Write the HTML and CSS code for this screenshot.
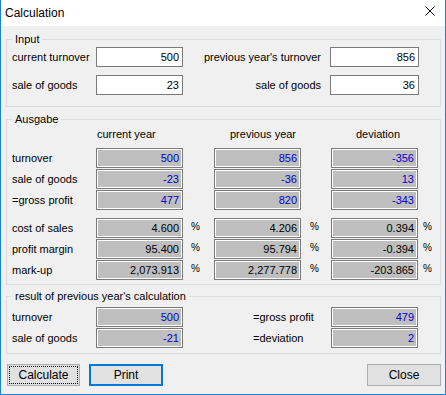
FILE: index.html
```html
<!DOCTYPE html>
<html lang="en">
<head>
    <meta charset="UTF-8">
    <title>Calculation</title>
    <link rel="stylesheet" href="styles.css">
</head>
<body>
    <!-- Janela de cálculo -->
    <div class="window">
        <div class="titlebar">
            <span class="title">Calculation</span>
            <svg class="close-x" width="10" height="10" viewBox="0 0 10 10">
                <path d="M0.5 0.5 L9.5 9.5 M9.5 0.5 L0.5 9.5" stroke="#000" stroke-width="1" fill="none"/>
            </svg>
        </div>

        <div class="client">
            <!-- Entrada -->
            <fieldset class="group group-input">
                <legend>Input</legend>
                <div class="input-grid">
                    <span class="lbl">current turnover</span>
                    <input class="edit" type="text" value="500">
                    <span class="lbl lbl-right">previous year's turnover</span>
                    <input class="edit" type="text" value="856">

                    <span class="lbl">sale of goods</span>
                    <input class="edit" type="text" value="23">
                    <span class="lbl lbl-right">sale of goods</span>
                    <input class="edit" type="text" value="36">
                </div>
            </fieldset>

            <!-- Saída -->
            <fieldset class="group group-wide">
                <legend>Ausgabe</legend>
                <div class="cols head">
                    <span class="hd hd-cur">current year</span>
                    <span class="hd hd-prev">previous year</span>
                    <span class="hd hd-dev">deviation</span>
                </div>
                <div class="cols rows">
                    <span class="lbl">turnover</span>
                    <div class="out blue c2">500</div>
                    <div class="out blue c4">856</div>
                    <div class="out blue c6">-356</div>

                    <span class="lbl">sale of goods</span>
                    <div class="out blue c2">-23</div>
                    <div class="out blue c4">-36</div>
                    <div class="out blue c6">13</div>

                    <span class="lbl">=gross profit</span>
                    <div class="out blue c2">477</div>
                    <div class="out blue c4">820</div>
                    <div class="out blue c6">-343</div>
                </div>
                <div class="cols rows rows-pct">
                    <span class="lbl">cost of sales</span>
                    <div class="out">4.600</div>
                    <span class="pct pct-a">%</span>
                    <div class="out">4.206</div>
                    <span class="pct pct-b">%</span>
                    <div class="out">0.394</div>
                    <span class="pct pct-c">%</span>

                    <span class="lbl">profit margin</span>
                    <div class="out">95.400</div>
                    <span class="pct pct-a">%</span>
                    <div class="out">95.794</div>
                    <span class="pct pct-b">%</span>
                    <div class="out">-0.394</div>
                    <span class="pct pct-c">%</span>

                    <span class="lbl">mark-up</span>
                    <div class="out">2,073.913</div>
                    <span class="pct pct-a">%</span>
                    <div class="out">2,277.778</div>
                    <span class="pct pct-b">%</span>
                    <div class="out">-203.865</div>
                    <span class="pct pct-c">%</span>
                </div>
            </fieldset>

            <!-- Resultado do ano anterior -->
            <fieldset class="group group-wide group-result">
                <legend>result of previous year's calculation</legend>
                <div class="cols rows">
                    <span class="lbl">turnover</span>
                    <div class="out blue c2">500</div>
                    <span class="lbl lbl-mid">=gross profit</span>
                    <div class="out blue c6">479</div>

                    <span class="lbl">sale of goods</span>
                    <div class="out blue c2">-21</div>
                    <span class="lbl lbl-mid">=deviation</span>
                    <div class="out blue c6">2</div>
                </div>
            </fieldset>

            <!-- Botões -->
            <div class="buttons">
                <button class="btn btn-focus">Calculate</button>
                <button class="btn btn-default">Print</button>
                <button class="btn btn-close">Close</button>
            </div>
        </div>
    </div>
</body>
</html>
```

FILE: styles.css
```css
/* Estilo geral */
body {
    margin: 0;
    font-family: "Liberation Sans", Arial, sans-serif;
    font-size: 11px;
    color: #000;
    background: #f0f0f0;
}

/* Janela */
.window {
    width: 446px;
    height: 395px;
    box-sizing: border-box;
    border: 1px solid #1883d7;
    border-top: none;
    background: #f0f0f0;
}

.titlebar {
    height: 26px;
    background: #fff;
    display: flex;
    align-items: center;
    justify-content: space-between;
    padding: 0 10px 0 4px;
}

.title {
    font-size: 12px;
    margin-top: -1px;
}

.close-x {
    display: block;
    margin-top: -4px;
}

.client {
    padding: 6px 4px 0 5px;
}

/* Caixas de grupo */
.group {
    margin: 0;
    border: 1px solid #dcdcdc;
    padding: 0 21px 11px 5px;
    min-width: 0;
}

.group legend {
    padding: 0 3px;
    line-height: 14px;
}

.group-wide {
    margin-top: 5px;
    padding: 0 0 4px 5px;
}

.group-result {
    margin-top: 4px;
    padding-bottom: 5px;
}

.lbl {
    white-space: nowrap;
    line-height: 20px;
}

/* Grade de entrada */
.input-grid {
    display: grid;
    grid-template-columns: 84px 87px 1fr 89px;
    grid-auto-rows: 20px;
    row-gap: 8px;
    margin-top: 1px;
}

.lbl-right {
    text-align: right;
    padding-right: 9px;
}

.edit {
    box-sizing: border-box;
    height: 20px;
    margin: 0;
    border: 1px solid #7a7a7a;
    background: #fff;
    font: inherit;
    text-align: right;
    padding: 0 3px 0 2px;
    outline: none;
}

/* Grade de saída */
.cols {
    display: grid;
    grid-template-columns: 84px 87px 31px 87px 30px 87px 1fr;
}

.cols .lbl {
    grid-column: 1;
}

.cols .lbl-mid {
    grid-column: 4 / 6;
    padding-left: 39px;
}

.head {
    margin: 1px 0 7px;
    line-height: 14px;
}

.hd-cur { grid-column: 2; padding-left: 1px; }
.hd-prev { grid-column: 4; padding-left: 16px; }
.hd-dev { grid-column: 6; padding-left: 25px; }

.rows {
    grid-auto-rows: 20px;
    row-gap: 1px;
}

.rows-pct {
    margin-top: 8px;
}

.group-result .rows {
    margin-top: 4px;
}

.c2 { grid-column: 2; }
.c4 { grid-column: 4; }
.c6 { grid-column: 6; }

.out {
    box-sizing: border-box;
    border: 1px solid #7a7a7a;
    box-shadow: inset 0 0 0 1px #fff;
    background: #bfbfbf;
    text-align: right;
    line-height: 18px;
    padding-right: 3px;
}

.blue {
    color: #0000d0;
}

.pct {
    line-height: 18px;
    font-size: 10px;
}

.pct-a { padding-left: 8px; }
.pct-b { padding-left: 9px; }
.pct-c { padding-left: 5px; }

/* Botões */
.buttons {
    display: flex;
    margin-top: 10px;
    padding-left: 1px;
}

.btn {
    box-sizing: border-box;
    width: 74px;
    height: 22px;
    margin: 0;
    padding: 0;
    font: inherit;
    font-size: 12px;
    color: #000;
    background: #e1e1e1;
    border: 1px solid #adadad;
}

.btn-focus {
    width: 73px;
    outline: 1px dotted #000;
    outline-offset: -3px;
}

.btn-default {
    margin-left: 9px;
    border: 2px solid #0078d7;
}

.btn-close {
    margin-left: auto;
}
```
